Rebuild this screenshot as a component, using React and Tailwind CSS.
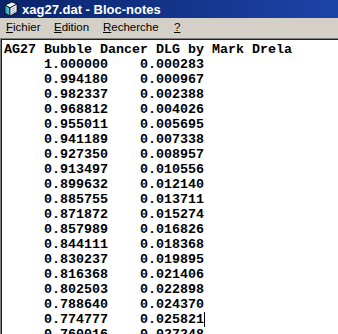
import React from "react";

const rows = [
  ["1.000000", "0.000283"],
  ["0.994180", "0.000967"],
  ["0.982337", "0.002388"],
  ["0.968812", "0.004026"],
  ["0.955011", "0.005695"],
  ["0.941189", "0.007338"],
  ["0.927350", "0.008957"],
  ["0.913497", "0.010556"],
  ["0.899632", "0.012140"],
  ["0.885755", "0.013711"],
  ["0.871872", "0.015274"],
  ["0.857989", "0.016826"],
  ["0.844111", "0.018368"],
  ["0.830237", "0.019895"],
  ["0.816368", "0.021406"],
  ["0.802503", "0.022898"],
  ["0.788640", "0.024370"],
  ["0.774777", "0.025821"],
  ["0.760016", "0.027248"],
];

function NotepadIcon() {
  return (
    <svg width="16" height="16" viewBox="0 0 16 16">
      <path d="M2 4 L9 1 L14 3 L7 7 Z" fill="#e8f8ff" stroke="#000" strokeWidth="0.8" />
      <path d="M2 4 L7 7 L7 15 L2 12 Z" fill="#40c0e0" stroke="#000" strokeWidth="0.8" />
      <path d="M7 7 L14 3 L14 11 L7 15 Z" fill="#ffffff" stroke="#000" strokeWidth="0.8" />
      <path d="M8.5 8.5 L12.5 6.3 M8.5 10.5 L12.5 8.3 M8.5 12.5 L12.5 10.3" stroke="#6080a0" strokeWidth="0.7" />
      <path d="M3 5 L3 12" stroke="#0080a0" strokeWidth="0.8" />
    </svg>
  );
}

export default function App() {
  return (
    <div className="w-[338px] h-[334px] overflow-hidden bg-[#d4d0c8] flex flex-col">
      <div className="h-[18px] shrink-0 flex items-center gap-[3px] pl-[3px] bg-gradient-to-r from-[#0a246a] to-[#1c44a8]">
        <NotepadIcon />
        <span
          className="text-white font-bold text-[13px] leading-none"
          style={{ fontFamily: '"Liberation Sans", Arial, sans-serif' }}
        >
          xag27.dat - Bloc-notes
        </span>
      </div>
      <div
        className="h-[20px] shrink-0 flex items-center text-[11.5px] text-black bg-[#d4d0c8] pl-[6px]"
        style={{ fontFamily: '"Liberation Sans", Arial, sans-serif' }}
      >
        <span className="w-[48px] shrink-0"><span className="underline">F</span>ichier</span>
        <span className="w-[49px] shrink-0"><span className="underline">E</span>dition</span>
        <span className="w-[71px] shrink-0"><span className="underline">R</span>echerche</span>
        <span><span className="underline">?</span></span>
      </div>
      <div className="flex-1 border-t border-l border-[#808080]">
        <div className="h-full bg-white border-t border-l border-[#202020] pl-[2px] pt-[2px]">
          <div
            className="text-black font-bold text-[13.33px] leading-[15px] whitespace-pre"
            style={{ fontFamily: '"Liberation Mono", "Courier New", monospace' }}
          >
            <div>AG27 Bubble Dancer DLG by Mark Drela</div>
            {rows.map(([a, b], i) => (
              <div key={i}>
                {"     " + a + "    " + b}
                {i === 17 && (
                  <span className="inline-block w-0 h-[15px] align-top border-l-[1.5px] border-black" />
                )}
              </div>
            ))}
          </div>
        </div>
      </div>
    </div>
  );
}
